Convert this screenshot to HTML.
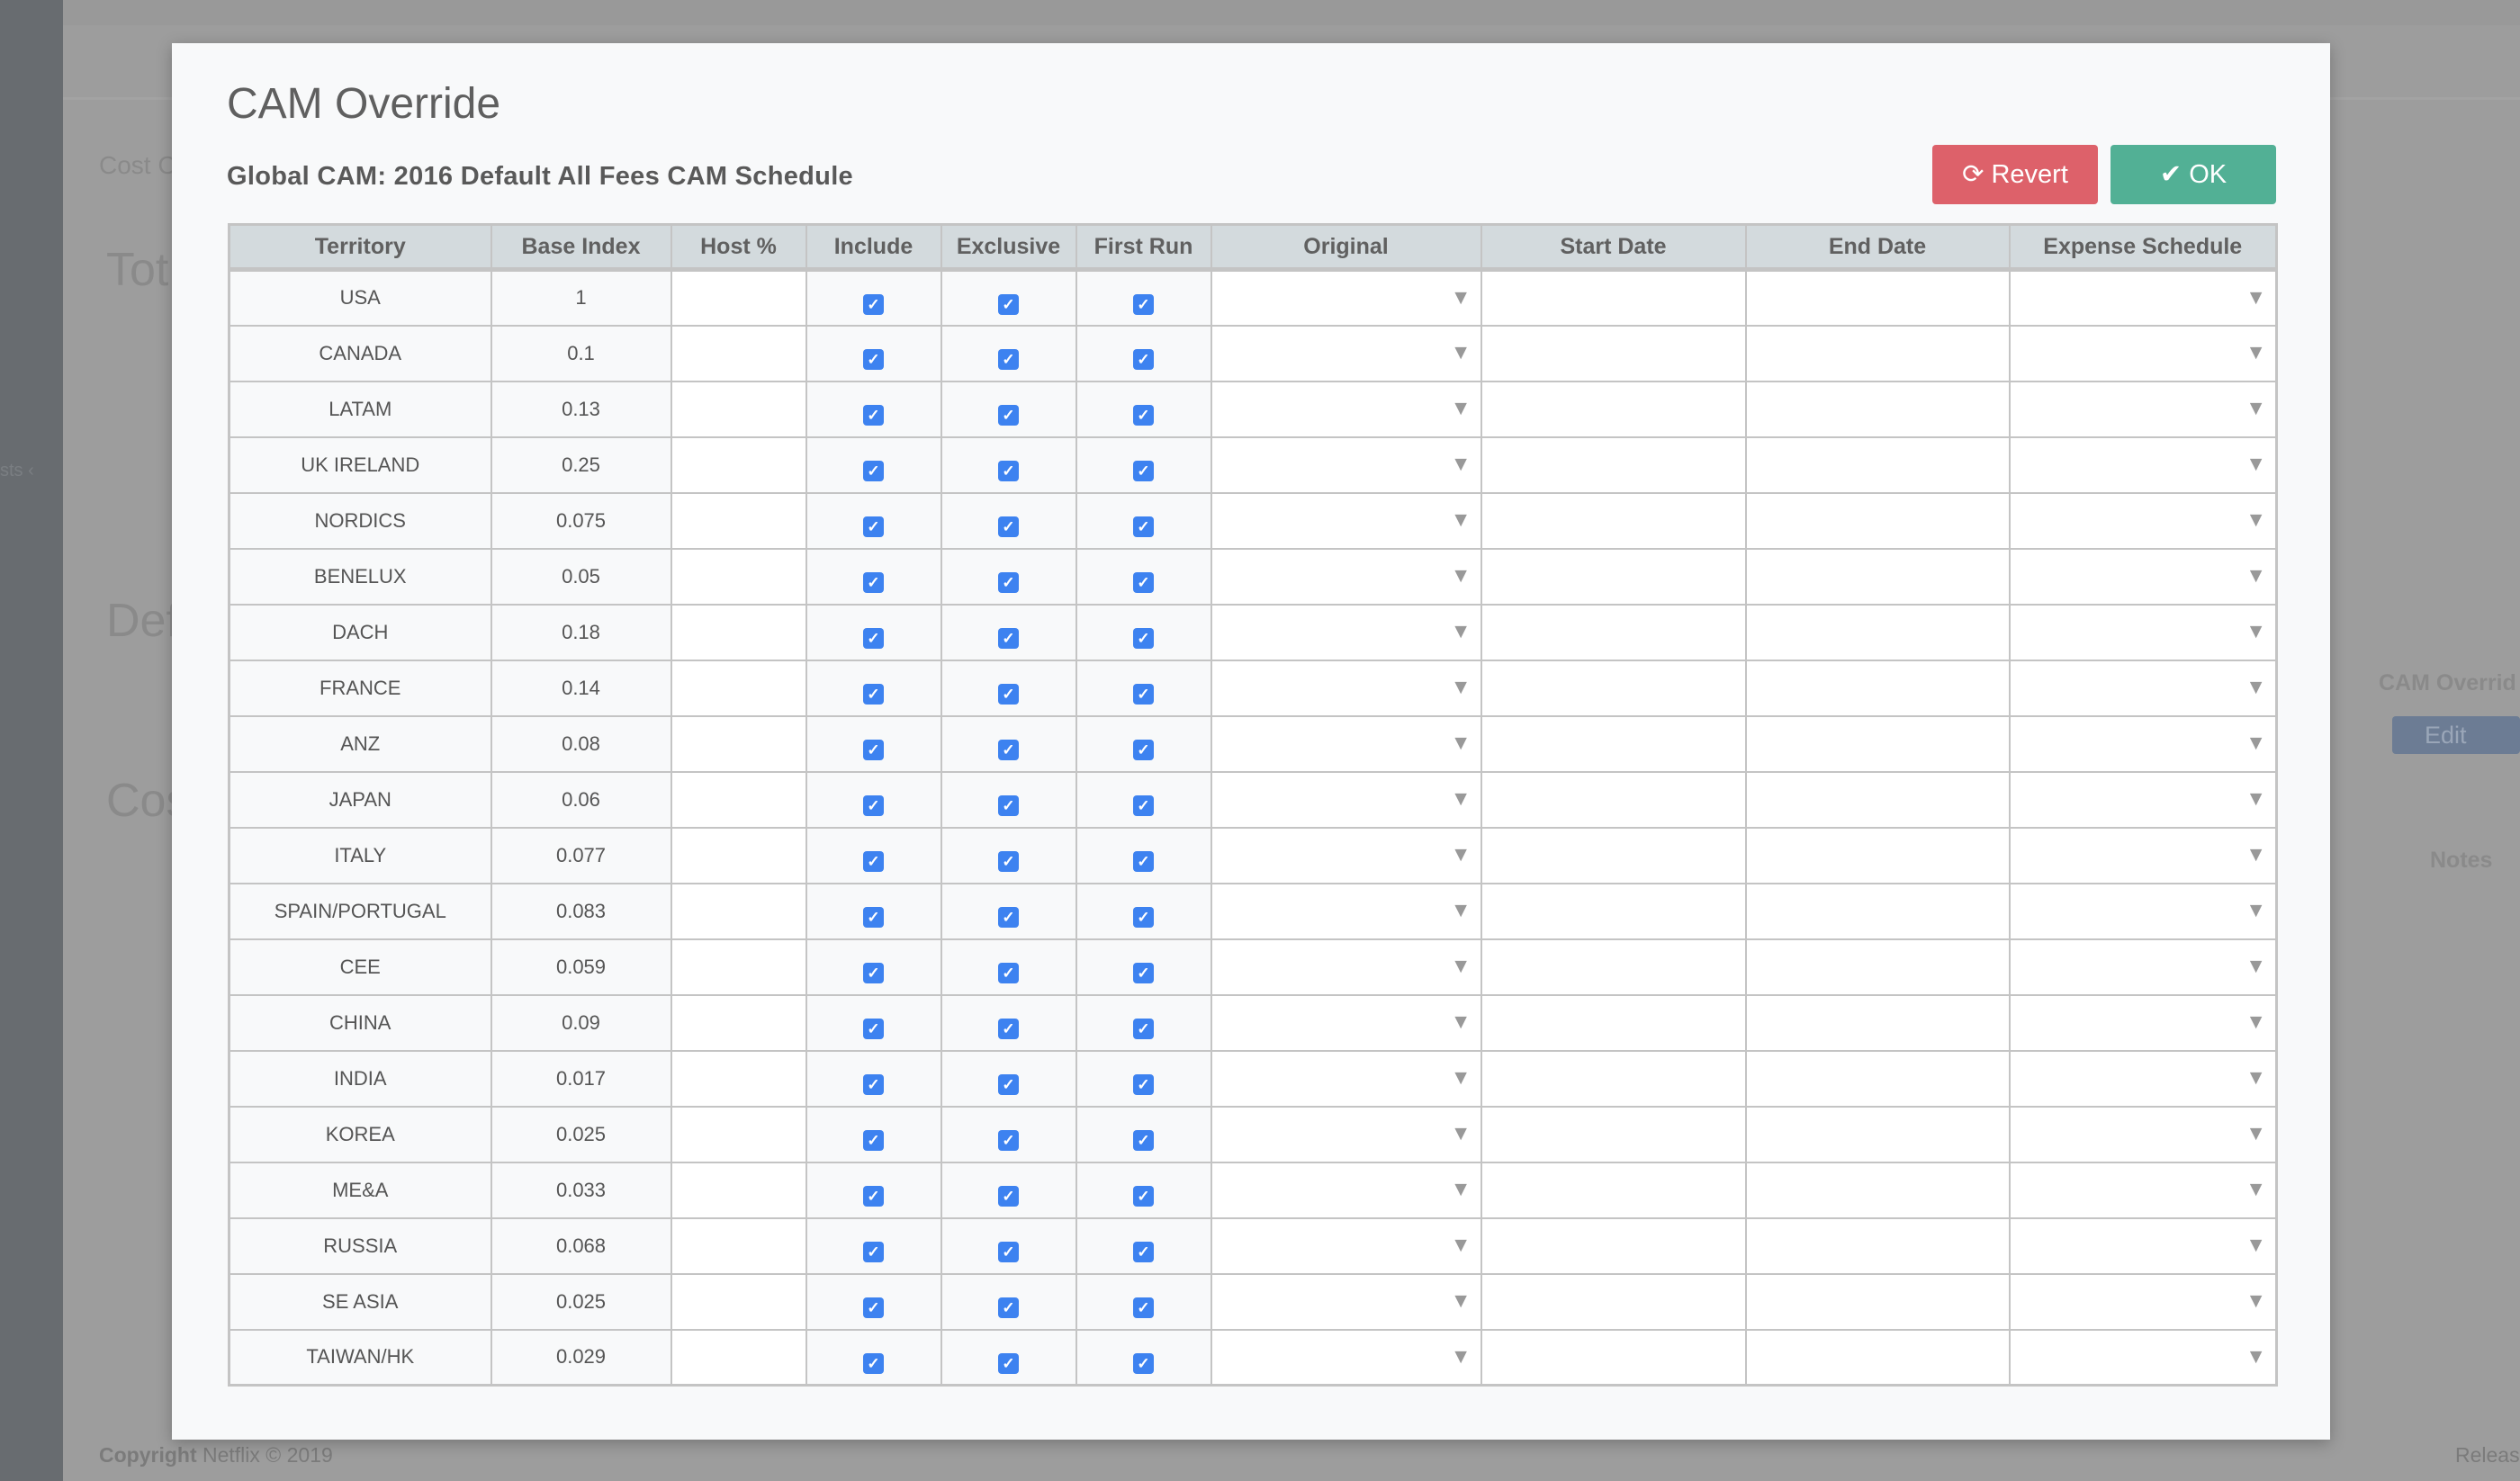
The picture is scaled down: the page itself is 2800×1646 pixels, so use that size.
<!DOCTYPE html>
<html><head><meta charset="utf-8"><style>
*{box-sizing:border-box;margin:0;padding:0}
body{width:2800px;height:1646px;overflow:hidden;background:#9d9d9d;font-family:"Liberation Sans",sans-serif;position:relative}
.side{position:absolute;left:0;top:0;width:70px;height:1646px;background:#686c70}
.bg{position:absolute;color:#8a8a8a;font-family:"Liberation Sans",sans-serif}
.modal{position:absolute;left:191px;top:48px;width:2398px;height:1552px;background:#f8f9fa;box-shadow:0 4px 16px rgba(0,0,0,.25)}
h1{position:absolute;left:61px;top:40px;font-size:48px;font-weight:normal;color:#5f5f5f}
h2{position:absolute;left:61px;top:132px;font-size:29px;font-weight:bold;color:#595959;letter-spacing:0.3px}
.btn{position:absolute;top:113px;height:66px;width:184px;border-radius:4px;color:#fff;font-size:29px;text-align:center;line-height:66px}
table{position:absolute;left:62px;top:200px;width:2275px;border-collapse:collapse;table-layout:fixed;border:3px solid #c4c4c4}
th{height:50px;background:#d3dadd;color:#606060;font-size:25px;font-weight:bold;border:2px solid #c4c4c4;border-bottom:5px solid #c4c4c4}
td{height:62px;border:2px solid #c4c4c4;font-size:22px;color:#555;text-align:center;background:#fff;position:relative}
td.l{background:#f8f9fa}
.cb{display:inline-block;width:23px;height:23px;border-radius:4px;background:#3d82f0;color:#fff;font-size:17px;line-height:23px;text-align:center;margin-top:14px;font-weight:bold}
.ar{position:absolute;right:10px;top:15px;color:#999;font-size:23px}
</style></head><body>
<div class="side"></div>
<div class="bg" style="left:70px;top:0;width:2730px;height:28px;background:#999"></div>
<div class="bg" style="left:70px;top:108px;width:2730px;height:3px;background:#a3a3a3"></div>
<div class="bg" style="left:110px;top:168px;font-size:28px">Cost C</div>
<div class="bg" style="left:118px;top:270px;font-size:52px">Tot</div>
<div class="bg" style="left:118px;top:660px;font-size:52px">Def</div>
<div class="bg" style="left:118px;top:860px;font-size:52px">Cos</div>
<div class="bg" style="left:0;top:512px;font-size:20px;color:#7a7e82">sts ‹</div>
<div class="bg" style="left:2643px;top:745px;font-size:25px;font-weight:bold">CAM Overrid</div>
<div class="bg" style="left:2658px;top:796px;width:142px;height:42px;background:#6c7c94;border-radius:4px;color:#9aa6b8;font-size:27px;line-height:42px;padding-left:36px">Edit</div>
<div class="bg" style="left:2700px;top:942px;font-size:25px;font-weight:bold">Notes</div>
<div class="bg" style="left:110px;top:1604px;font-size:23px;color:#7b7b7b"><b>Copyright</b> Netflix © 2019</div>
<div class="bg" style="left:2728px;top:1604px;font-size:23px;color:#7b7b7b">Releas</div>
<div class="modal">
<h1>CAM Override</h1>
<h2>Global CAM: 2016 Default All Fees CAM Schedule</h2>
<div class="btn" style="left:1956px;background:#dd616a">⟳ Revert</div>
<div class="btn" style="left:2154px;background:#52b095">✔ OK</div>
<table>
<colgroup><col style="width:291px"><col style="width:200px"><col style="width:150px"><col style="width:150px"><col style="width:150px"><col style="width:150px"><col style="width:300px"><col style="width:294px"><col style="width:293px"><col style="width:297px"></colgroup>
<tr><th>Territory</th><th>Base Index</th><th>Host %</th><th>Include</th><th>Exclusive</th><th>First Run</th><th>Original</th><th>Start Date</th><th>End Date</th><th>Expense Schedule</th></tr>
<tbody>
<tr><td class="l">USA</td><td class="l">1</td><td></td><td class="l"><span class="cb">✓</span></td><td class="l"><span class="cb">✓</span></td><td class="l"><span class="cb">✓</span></td><td><span class="ar">▼</span></td><td></td><td></td><td><span class="ar">▼</span></td></tr>
<tr><td class="l">CANADA</td><td class="l">0.1</td><td></td><td class="l"><span class="cb">✓</span></td><td class="l"><span class="cb">✓</span></td><td class="l"><span class="cb">✓</span></td><td><span class="ar">▼</span></td><td></td><td></td><td><span class="ar">▼</span></td></tr>
<tr><td class="l">LATAM</td><td class="l">0.13</td><td></td><td class="l"><span class="cb">✓</span></td><td class="l"><span class="cb">✓</span></td><td class="l"><span class="cb">✓</span></td><td><span class="ar">▼</span></td><td></td><td></td><td><span class="ar">▼</span></td></tr>
<tr><td class="l">UK IRELAND</td><td class="l">0.25</td><td></td><td class="l"><span class="cb">✓</span></td><td class="l"><span class="cb">✓</span></td><td class="l"><span class="cb">✓</span></td><td><span class="ar">▼</span></td><td></td><td></td><td><span class="ar">▼</span></td></tr>
<tr><td class="l">NORDICS</td><td class="l">0.075</td><td></td><td class="l"><span class="cb">✓</span></td><td class="l"><span class="cb">✓</span></td><td class="l"><span class="cb">✓</span></td><td><span class="ar">▼</span></td><td></td><td></td><td><span class="ar">▼</span></td></tr>
<tr><td class="l">BENELUX</td><td class="l">0.05</td><td></td><td class="l"><span class="cb">✓</span></td><td class="l"><span class="cb">✓</span></td><td class="l"><span class="cb">✓</span></td><td><span class="ar">▼</span></td><td></td><td></td><td><span class="ar">▼</span></td></tr>
<tr><td class="l">DACH</td><td class="l">0.18</td><td></td><td class="l"><span class="cb">✓</span></td><td class="l"><span class="cb">✓</span></td><td class="l"><span class="cb">✓</span></td><td><span class="ar">▼</span></td><td></td><td></td><td><span class="ar">▼</span></td></tr>
<tr><td class="l">FRANCE</td><td class="l">0.14</td><td></td><td class="l"><span class="cb">✓</span></td><td class="l"><span class="cb">✓</span></td><td class="l"><span class="cb">✓</span></td><td><span class="ar">▼</span></td><td></td><td></td><td><span class="ar">▼</span></td></tr>
<tr><td class="l">ANZ</td><td class="l">0.08</td><td></td><td class="l"><span class="cb">✓</span></td><td class="l"><span class="cb">✓</span></td><td class="l"><span class="cb">✓</span></td><td><span class="ar">▼</span></td><td></td><td></td><td><span class="ar">▼</span></td></tr>
<tr><td class="l">JAPAN</td><td class="l">0.06</td><td></td><td class="l"><span class="cb">✓</span></td><td class="l"><span class="cb">✓</span></td><td class="l"><span class="cb">✓</span></td><td><span class="ar">▼</span></td><td></td><td></td><td><span class="ar">▼</span></td></tr>
<tr><td class="l">ITALY</td><td class="l">0.077</td><td></td><td class="l"><span class="cb">✓</span></td><td class="l"><span class="cb">✓</span></td><td class="l"><span class="cb">✓</span></td><td><span class="ar">▼</span></td><td></td><td></td><td><span class="ar">▼</span></td></tr>
<tr><td class="l">SPAIN/PORTUGAL</td><td class="l">0.083</td><td></td><td class="l"><span class="cb">✓</span></td><td class="l"><span class="cb">✓</span></td><td class="l"><span class="cb">✓</span></td><td><span class="ar">▼</span></td><td></td><td></td><td><span class="ar">▼</span></td></tr>
<tr><td class="l">CEE</td><td class="l">0.059</td><td></td><td class="l"><span class="cb">✓</span></td><td class="l"><span class="cb">✓</span></td><td class="l"><span class="cb">✓</span></td><td><span class="ar">▼</span></td><td></td><td></td><td><span class="ar">▼</span></td></tr>
<tr><td class="l">CHINA</td><td class="l">0.09</td><td></td><td class="l"><span class="cb">✓</span></td><td class="l"><span class="cb">✓</span></td><td class="l"><span class="cb">✓</span></td><td><span class="ar">▼</span></td><td></td><td></td><td><span class="ar">▼</span></td></tr>
<tr><td class="l">INDIA</td><td class="l">0.017</td><td></td><td class="l"><span class="cb">✓</span></td><td class="l"><span class="cb">✓</span></td><td class="l"><span class="cb">✓</span></td><td><span class="ar">▼</span></td><td></td><td></td><td><span class="ar">▼</span></td></tr>
<tr><td class="l">KOREA</td><td class="l">0.025</td><td></td><td class="l"><span class="cb">✓</span></td><td class="l"><span class="cb">✓</span></td><td class="l"><span class="cb">✓</span></td><td><span class="ar">▼</span></td><td></td><td></td><td><span class="ar">▼</span></td></tr>
<tr><td class="l">ME&amp;A</td><td class="l">0.033</td><td></td><td class="l"><span class="cb">✓</span></td><td class="l"><span class="cb">✓</span></td><td class="l"><span class="cb">✓</span></td><td><span class="ar">▼</span></td><td></td><td></td><td><span class="ar">▼</span></td></tr>
<tr><td class="l">RUSSIA</td><td class="l">0.068</td><td></td><td class="l"><span class="cb">✓</span></td><td class="l"><span class="cb">✓</span></td><td class="l"><span class="cb">✓</span></td><td><span class="ar">▼</span></td><td></td><td></td><td><span class="ar">▼</span></td></tr>
<tr><td class="l">SE ASIA</td><td class="l">0.025</td><td></td><td class="l"><span class="cb">✓</span></td><td class="l"><span class="cb">✓</span></td><td class="l"><span class="cb">✓</span></td><td><span class="ar">▼</span></td><td></td><td></td><td><span class="ar">▼</span></td></tr>
<tr><td class="l">TAIWAN/HK</td><td class="l">0.029</td><td></td><td class="l"><span class="cb">✓</span></td><td class="l"><span class="cb">✓</span></td><td class="l"><span class="cb">✓</span></td><td><span class="ar">▼</span></td><td></td><td></td><td><span class="ar">▼</span></td></tr>
</tbody>
</table>
</div>
</body></html>
